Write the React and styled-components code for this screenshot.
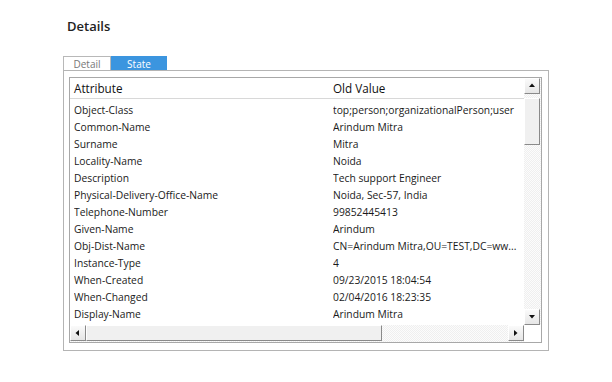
import React from "react";
import styled, { createGlobalStyle } from "styled-components";

const Global = createGlobalStyle`
  html, body { margin: 0; padding: 0; background: #fff; }
  body { font-family: "Open Sans", "Noto Sans", sans-serif; color: #222; }
`;

const Page = styled.div`
  padding: 18px 0 0 63px;
  width: 486px;
`;

const Title = styled.h2`
  margin: 0 0 22px 4px;
  font-size: 13px;
  font-weight: 600;
  line-height: 16px;
  color: #222;
`;

const Tabs = styled.div`
  display: flex;
  height: 14px;
`;

const Tab = styled.div`
  width: ${(p) => p.$w}px;
  box-sizing: border-box;
  display: flex;
  align-items: center;
  justify-content: center;
  font-size: 10px;
  line-height: 14px;
  color: ${(p) => (p.$active ? "#fff" : "#777")};
  background: ${(p) => (p.$active ? "#3b95df" : "#fff")};
  border: 1px solid ${(p) => (p.$active ? "#3b95df" : "#b8b8b8")};
  border-bottom: none;
`;

const Frame = styled.div`
  border: 1px solid #b4b4b4;
  height: 281px;
  box-sizing: border-box;
  padding: 6px 6px 7px 5px;
`;

const Grid = styled.div`
  border: 1px solid #a8a8a8;
  height: 100%;
  box-sizing: border-box;
  display: grid;
  grid-template-columns: 1fr 17px;
  grid-template-rows: 1fr 17px;
`;

const Viewport = styled.div`
  overflow: hidden;
  display: flex;
  flex-direction: column;
`;

const Header = styled.div`
  display: grid;
  grid-template-columns: 259px 1fr;
  height: 20px;
  align-items: center;
  border-bottom: 1px solid #d8d8d8;
  font-size: 11.7px;
  color: #111;
  padding-left: 4px;
  flex: none;
`;

const Rows = styled.div`
  padding-top: 2px;
`;

const Row = styled.div`
  display: grid;
  grid-template-columns: 259px 1fr;
  height: 17px;
  align-items: center;
  font-size: 10.3px;
  padding-left: 4px;
  white-space: nowrap;
  color: #1a1a1a;
`;

const Cell = styled.span`
  overflow: hidden;
`;

const Track = styled.div`
  display: flex;
  flex-direction: ${(p) => (p.$vertical ? "column" : "row")};
  background-color: #f6f6f6;
  background-image: repeating-conic-gradient(#efefef 0 25%, #fcfcfc 0 50%);
  background-size: 2px 2px;
`;

const Btn = styled.div`
  width: 16px;
  height: 16px;
  flex: none;
  box-sizing: border-box;
  background: linear-gradient(#fafafa, #e6e6e6);
  border: 1px solid;
  border-color: #fff #8a8a8a #8a8a8a #fff;
  display: flex;
  align-items: center;
  justify-content: center;
`;

const Thumb = styled.div`
  flex: none;
  box-sizing: border-box;
  background: #f0f0f0;
  border: 1px solid;
  border-color: #fff #8a8a8a #8a8a8a #fff;
  width: ${(p) => p.$w};
  height: ${(p) => p.$h};
  margin: ${(p) => p.$m};
`;

const Spacer = styled.div`
  flex: 1;
`;

const Corner = styled.div`
  background: #fff;
`;

const Arrow = ({ dir }) => {
  const pts = {
    up: "1,5 4,1.5 7,5",
    down: "1,2 4,5.5 7,2",
    left: "5,1 1.5,4 5,7",
    right: "2,1 5.5,4 2,7",
  }[dir];
  return (
    <svg width="8" height="8" viewBox="0 0 8 8">
      <polygon points={pts} fill="#111" />
    </svg>
  );
};

const data = [
  ["Object-Class", "top;person;organizationalPerson;user"],
  ["Common-Name", "Arindum Mitra"],
  ["Surname", "Mitra"],
  ["Locality-Name", "Noida"],
  ["Description", "Tech support Engineer"],
  ["Physical-Delivery-Office-Name", "Noida, Sec-57, India"],
  ["Telephone-Number", "99852445413"],
  ["Given-Name", "Arindum"],
  ["Obj-Dist-Name", "CN=Arindum Mitra,OU=TEST,DC=ww..."],
  ["Instance-Type", "4"],
  ["When-Created", "09/23/2015 18:04:54"],
  ["When-Changed", "02/04/2016 18:23:35"],
  ["Display-Name", "Arindum Mitra"],
];

export default function App() {
  return (
    <>
      <Global />
      <Page>
        <Title>Details</Title>
        <Tabs>
          <Tab $w={48}>Detail</Tab>
          <Tab $w={56} $active>
            State
          </Tab>
        </Tabs>
        <Frame>
          <Grid>
            <Viewport>
              <Header>
                <span>Attribute</span>
                <span>Old Value</span>
              </Header>
              <Rows>
                {data.map(([a, v]) => (
                  <Row key={a}>
                    <Cell>{a}</Cell>
                    <Cell>{v}</Cell>
                  </Row>
                ))}
              </Rows>
            </Viewport>
            <Track $vertical>
              <Btn>
                <Arrow dir="up" />
              </Btn>
              <Thumb $w="16px" $h="47px" $m="4px 0 0 0" />
              <Spacer />
              <Btn>
                <Arrow dir="down" />
              </Btn>
            </Track>
            <Track>
              <Btn>
                <Arrow dir="left" />
              </Btn>
              <Thumb $w="296px" $h="16px" $m="0" />
              <Spacer />
              <Btn>
                <Arrow dir="right" />
              </Btn>
            </Track>
            <Corner />
          </Grid>
        </Frame>
      </Page>
    </>
  );
}
